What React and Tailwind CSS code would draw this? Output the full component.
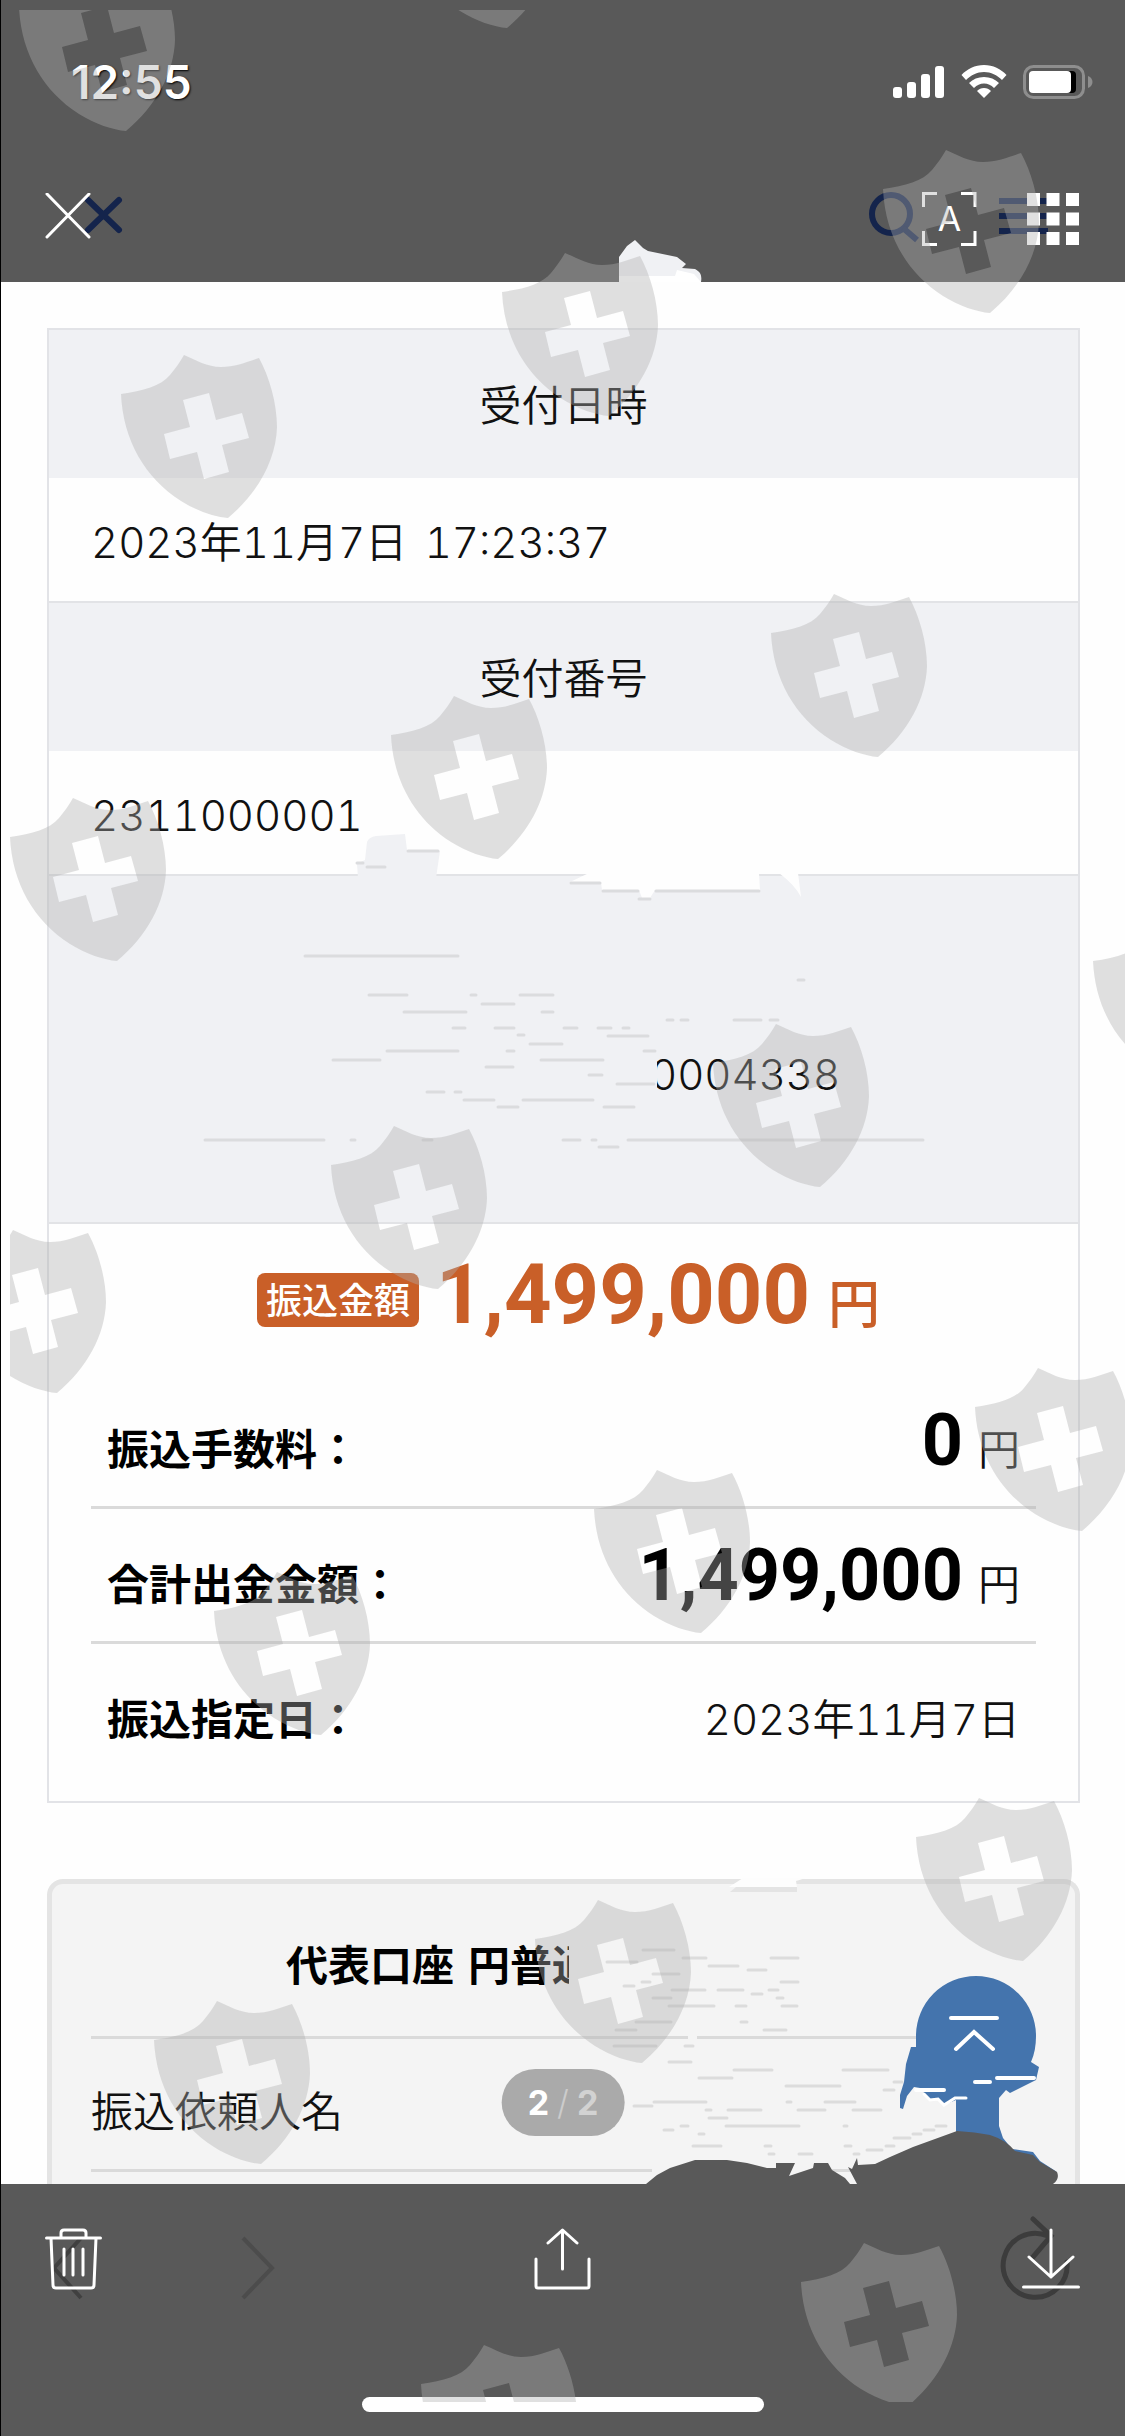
import React from "react";

const SHIELDS = [
  [19, -32], [400, -135], [121, 355], [502, 253], [883, 150], [771, 594],
  [391, 696], [10, 798], [1093, 922], [713, 1024], [331, 1126], [-50, 1230],
  [975, 1368], [594, 1470], [214, 1572], [916, 1798], [535, 1900],
  [154, 2001], [801, 2243], [421, 2345],
];

const SHIELD_PATH =
  "M0 39C22 36 40 31 49 20C54 14 59 7 63 0C75 5 86 12 100 12C114 12 126 7 138 3C148 21 156 48 156 72C155 105 137 138 107 163C94 162 76 156 60 146C24 123 2 85 0 39ZM62 45L69 72L43 79L49 104L76 97L83 124L108 117L101 90L128 83L121 58L95 65L88 38Z";

const DETAIL_DASHES = [
  [304, 459, 956], [368, 408, 995], [470, 477, 995], [519, 554, 995], [481, 515, 1004],
  [403, 467, 1012], [541, 554, 1012], [452, 466, 1028], [494, 515, 1028], [563, 578, 1028],
  [597, 612, 1028], [622, 630, 1028], [607, 649, 1036], [517, 525, 1035], [529, 563, 1044],
  [506, 515, 1051], [386, 459, 1051], [643, 656, 1051], [332, 381, 1060], [540, 604, 1060],
  [485, 514, 1067], [588, 603, 1075], [616, 655, 1084], [426, 445, 1092], [454, 462, 1092],
  [463, 495, 1100], [522, 594, 1100], [497, 519, 1107], [603, 635, 1107], [204, 325, 1140],
  [350, 356, 1140], [422, 433, 1140], [562, 581, 1140], [591, 597, 1140], [627, 924, 1140],
  [598, 619, 1147], [733, 762, 1020], [769, 779, 1020], [666, 674, 1020], [680, 689, 1020],
  [797, 805, 980], [407, 439, 851], [366, 386, 867], [356, 364, 863], [570, 601, 883],
  [602, 639, 891], [655, 760, 891], [638, 651, 899],
];

const ACCOUNT_DASHES = [
  [642, 675, 1950], [606, 638, 1962], [652, 680, 1974], [682, 707, 1958], [708, 739, 1966],
  [770, 799, 1958], [747, 767, 1970], [780, 799, 1982], [641, 651, 1982], [623, 635, 1986],
  [671, 706, 1990], [717, 744, 1990], [768, 779, 1990], [751, 763, 1994], [652, 672, 1998],
  [776, 784, 1998], [668, 715, 2006], [735, 747, 2006], [781, 798, 2006], [635, 672, 2022],
  [740, 748, 2022], [615, 637, 2030], [763, 787, 2030], [613, 657, 2046], [684, 694, 2046],
  [668, 692, 2062], [733, 773, 2070], [842, 889, 2070], [698, 733, 2078], [785, 841, 2086],
  [653, 707, 2102], [786, 792, 2102], [824, 856, 2102], [633, 653, 2106], [705, 712, 2110],
  [727, 762, 2110], [797, 826, 2110], [852, 882, 2110], [708, 728, 2118], [725, 800, 2126],
  [680, 689, 2126], [843, 848, 2126], [663, 674, 2130], [698, 705, 2134], [692, 722, 2146],
  [764, 772, 2146], [844, 852, 2146], [768, 775, 2154], [798, 813, 2154], [853, 860, 2154],
  [912, 922, 2134], [893, 911, 2138], [885, 895, 2146], [866, 883, 2150], [935, 947, 2126],
  [923, 935, 2130], [883, 895, 2090], [893, 903, 2082],
];

function Dashes({ items, color }) {
  return (
    <g stroke={color} strokeWidth="3" strokeLinecap="round">
      {items.map(([a, b, y], i) => (
        <line key={i} x1={a + 1} x2={b - 1} y1={y} y2={y} />
      ))}
    </g>
  );
}

function Watermark() {
  return (
    <div aria-hidden="true" className="pointer-events-none absolute inset-x-0 top-[10px] h-[2392px] overflow-hidden pl-[9px]">
      <svg width="1115" height="2392" viewBox="10 10 1115 2392" fill="#b0b0b0" fillOpacity="0.39" fillRule="evenodd" className="block max-w-none">
        {SHIELDS.map(([x, y]) => (
          <path key={`${x}-${y}`} d={SHIELD_PATH} transform={`translate(${x} ${y})`} />
        ))}
      </svg>
    </div>
  );
}

function StatusIcons() {
  return (
    <div className="flex items-center gap-4">
      <svg width="52" height="34" viewBox="0 0 52 34" fill="#fff">
        <rect x="0" y="22" width="9" height="11" rx="3" />
        <rect x="14" y="17" width="9" height="16" rx="3" />
        <rect x="28" y="9" width="9" height="24" rx="3" />
        <rect x="42" y="1" width="9" height="32" rx="3" />
      </svg>
      <svg width="46" height="34" viewBox="0 0 46 34" fill="#fff">
        <path d="M23 0C32 0 40 4 45.500 10L41 15C36 10 30 7 23 7S10 10 5 15L.5 10C6 4 14 0 23 0Z" />
        <path d="M23 12C29 12 34 14 38 18L33 23C30 20 27 18.500 23 18.500S16 20 13 23L8 18C12 14 17 12 23 12Z" />
        <path d="M23 23C26 23 28 24 30 26L23 33L16 26C18 24 20 23 23 23Z" />
      </svg>
      <svg width="70" height="34" viewBox="0 0 70 34">
        <rect x="1.500" y="1.500" width="59" height="31" rx="9" fill="none" stroke="#8e8e8e" strokeWidth="3" />
        <rect x="12" y="6" width="41" height="22" rx="4" fill="#000" />
        <rect x="6" y="6" width="42" height="22" rx="4" fill="#fff" />
        <path d="M65 11C71 13 71 21 65 23Z" fill="#8e8e8e" />
      </svg>
    </div>
  );
}

function Header() {
  return (
    <header className="relative bg-[#595959]">
      <div className="flex h-[164px] items-center justify-between pl-[70px] pr-8">
        <time className="font-['Inter',sans-serif] text-[46px] font-semibold leading-none text-white [text-shadow:1px_1px_2px_#000]">12:55</time>
        <StatusIcons />
      </div>

      <svg aria-hidden="true" className="absolute bottom-0 left-0 h-[118px] w-[140px]" viewBox="1 164 140 118" fill="none" stroke="#14244c" strokeWidth="6" strokeLinecap="round">
        <path d="M88 200L119 230M119 200L88 230" />
      </svg>
      <svg aria-hidden="true" className="absolute bottom-0 right-0 h-[118px] w-[265px]" viewBox="860 164 265 118" fill="none" stroke="#14244c" strokeWidth="6">
        <circle cx="891" cy="214" r="19" />
        <path d="M903 228L917 240M999 201H1048M999 216H1048M999 231H1048" />
      </svg>
      <svg aria-hidden="true" className="absolute bottom-0 left-[617px] h-11 w-[88px]" viewBox="618 238 88 44">
        <path d="M619 282V257L627 246L635 240L643 248L648 251L677 257L686 264L682 268L695 269C701 272 702 276 701 282Z" fill="#f0f1f4" />
        <path d="M619 276H675L677 270L694 274L701 282H619Z" fill="#fff" />
      </svg>

      <div className="relative flex h-[118px] items-center justify-between pb-2 pl-11 pr-[46px]">
        <button type="button" aria-label="閉じる">
          <svg width="46" height="52" viewBox="0 0 46 52" fill="none" stroke="#fff" strokeWidth="3" strokeLinecap="round">
            <path d="M2 1L44 44M44 1L2 44" />
          </svg>
        </button>
        <div className="flex items-center gap-[50px]">
          <button type="button" aria-label="テキスト認識" className="relative flex h-[54px] w-[55px] items-center justify-center font-['Inter',sans-serif] text-[34px] font-normal leading-none text-white">
            <svg className="absolute inset-0" width="55" height="54" viewBox="0 0 55 54" fill="none" stroke="#fff" strokeWidth="3">
              <path d="M1.500 15V1.500H15M39 1.500H53V15M53 39V52.500H39M15 52.500H1.500V39" />
            </svg>
            A
          </button>
          <button type="button" aria-label="一覧">
            <svg width="52" height="52" viewBox="0 0 52 52" fill="#fff">
              {[0, 19.5, 39].map((y) => [0, 19.5, 39].map((x) => <rect key={`${x}-${y}`} x={x} y={y} width="13" height="13" />))}
            </svg>
          </button>
        </div>
      </div>
    </header>
  );
}

function Num({ children }) {
  return <span className="font-['Inter',sans-serif] leading-none tabular-nums">{children}</span>;
}

function JapaneseDate() {
  return (
    <>
      <Num>2023</Num>年<Num>11</Num>月<Num>7</Num>日
    </>
  );
}

function AmountRow({ label, children, last }) {
  return (
    <div className={last ? "flex items-baseline justify-between pb-[54px] pl-4 pr-4 pt-[43px]" : "flex items-baseline justify-between border-b-[3px] border-[#dadada] pb-[25px] pl-4 pr-4 pt-[27px]"}>
      <dt className="font-bold text-black">{label}</dt>
      <dd>{children}</dd>
    </div>
  );
}

function Yen({ value }) {
  return (
    <>
      <span className="mr-[15px] font-['Roboto',sans-serif] text-[72px] font-bold leading-[80px] text-black">{value}</span>円
    </>
  );
}

function TransferCard() {
  return (
    <section className="mt-[46px] border-2 border-[#e2e3e7] bg-[#fefefe]">
      <dl>
        <dt className="bg-[#f0f1f4] pb-[45px] pt-[43px] text-center">受付日時</dt>
        <dd className="border-b-2 border-[#e2e3e6] pb-[31px] pl-[42px] pt-[32px]">
          <JapaneseDate /> <span className="ml-2"><Num>17:23:37</Num></span>
        </dd>
        <dt className="bg-[#f0f1f4] pb-[45px] pt-[43px] text-center">受付番号</dt>
        <dd className="border-b-2 border-[#e2e3e6] pb-[31px] pl-[42px] pt-[32px]">
          <Num>2311000001</Num>
        </dd>
      </dl>
      <p className="border-b-2 border-[#e2e3e6] bg-[#f0f1f4] pb-[120px] pl-[601px] pt-[166px]">
        <Num>0004338</Num>
      </p>
      <div className="flex items-baseline justify-center pb-[34px] pl-[10px] pt-[26px] text-[#c95f28]">
        <span className="mr-[17px] mt-[23px] self-start rounded-lg bg-[#c95f28] px-[9px] pb-1 text-[36px] font-medium leading-[50px] text-white">振込金額</span>
        <strong className="mr-[18px] font-['Roboto',sans-serif] text-[83px] font-bold leading-[90px]">1,499,000</strong>
        <span className="text-[52px] font-medium leading-none">円</span>
      </div>
      <dl className="mx-[42px]">
        <AmountRow label="振込手数料："><Yen value="0" /></AmountRow>
        <AmountRow label="合計出金金額："><Yen value="1,499,000" /></AmountRow>
        <AmountRow label="振込指定日：" last><JapaneseDate /></AmountRow>
      </dl>
    </section>
  );
}

function AccountCard() {
  return (
    <section className="mt-[76px] min-h-0 flex-1 rounded-t-2xl border-[5px] border-b-0 border-[#e4e4e4] bg-[#f4f4f4] px-[39px]">
      <h2 className="flex gap-[14px] border-b-[3px] border-[#dadada] pb-[43px] pl-[195px] pt-[49px] font-bold text-black">
        <span>代表口座</span>
        <span>円普通</span>
      </h2>
      <p className="border-b-[3px] border-[#dadada] pb-[30px] pt-[40px]">振込依頼人名</p>
    </section>
  );
}

function Erasures() {
  return (
    <svg aria-hidden="true" className="pointer-events-none absolute left-0 top-0 h-[1902px] w-[1124px]" viewBox="1 282 1124 1902">
      <rect x="640" y="1050" width="17" height="46" fill="#f0f1f4" />
      <rect x="569" y="1935" width="40" height="60" fill="#f4f4f4" />
      <path d="M358 878L357 864L365 860L367 842Q369 837 376 836L405 834L407 850L440 851L436 878Z" fill="#f0f1f4" />
      <path d="M589 873L570 882H601L602 890H639L642 898H650L655 890H760L759 873ZM779 873Q795 885 801 897L798 873Z" fill="#fefefe" />
      <Dashes items={DETAIL_DASHES} color="#dbdcde" />
      <path d="M743 1878L729 1887H797L796 1881L806 1878Z" fill="#fdfdfd" />
      <path d="M736 1887H797V1892H730Z" fill="#e4e4e4" />
      <rect x="688" y="2035" width="9" height="6" fill="#f4f4f4" />
      <rect x="652" y="2167" width="175" height="6" fill="#f4f4f4" />
      <Dashes items={ACCOUNT_DASHES} color="#dcdcdc" />
    </svg>
  );
}

function BackToTop() {
  return (
    <button type="button" aria-label="ページの先頭へ" className="absolute bottom-0 right-[65px] h-[210px] w-[162px]">
      <svg width="162" height="210" viewBox="898 1974 162 210" fill="none">
        <path d="M916 2047L916 2036A60 60 0 1 1 1036 2036Q1036 2051 1031 2062L1039 2067L1036 2080L1010 2093L1006 2090L999 2098V2126L1003 2138L1012 2149L1033 2152L1040 2161L1057 2172L1000 2160H956V2100L944 2105L938 2099L930 2100L920 2088L914 2087L907 2096L903 2109L900 2108V2095L904 2082L906 2064L911 2047Z" fill="#4474ad" />
        <g stroke="#fff" strokeWidth="4" strokeLinecap="round">
          <path d="M951 2018H997M997 2078H1034M975 2082H990M916 2090H944" />
          <path d="M924 2094L930 2100L938 2099L944 2105L955 2098H966" strokeWidth="3" />
          <path d="M956 2049L974 2032L993 2049" />
        </g>
      </svg>
    </button>
  );
}

function Shadow() {
  return (
    <svg aria-hidden="true" className="pointer-events-none absolute bottom-0 right-[65px] h-[60px] w-[420px]" viewBox="640 2124 420 60">
      <path d="M646 2184L657 2175L670 2168L695 2160H727L747 2163L767 2168H776V2163H795L789 2176L813 2168L814 2163H828L832 2170L845 2178L850 2184H857L848 2167L852 2169L857 2158L858 2165L875 2164L890 2157L913 2147L957 2131Q975 2132 990 2135Q1006 2140 1015 2151L1033 2155L1040 2162L1057 2172Q1060 2179 1053 2184Z" fill="#595959" />
    </svg>
  );
}

function Toolbar() {
  return (
    <footer className="relative bg-[#595959] pb-6">
      <svg aria-hidden="true" className="absolute left-0 top-0 h-[140px] w-[300px]" viewBox="1 2184 300 140" fill="none" strokeWidth="4">
        <path d="M81 2238L54 2268L81 2298" stroke="#404040" />
        <path d="M243 2238L272 2268L243 2298" stroke="#4c4c4c" />
      </svg>
      <svg aria-hidden="true" className="absolute right-0 top-0 h-[140px] w-[125px]" viewBox="1000 2184 125 140" fill="none" stroke="#3c3c3c" strokeWidth="5" strokeLinecap="round">
        <path d="M1048 2236A32 32 0 1 0 1067 2262M1033 2219L1051 2236L1033 2257" />
      </svg>
      <div className="relative flex items-center justify-between pb-[107px] pl-11 pr-[45px] pt-[44px]">
        <button type="button" aria-label="削除">
          <svg width="57" height="62" viewBox="0 0 57 62" fill="none" stroke="#fff" strokeWidth="3" strokeLinecap="round" strokeLinejoin="round">
            <path d="M1.500 10H55.500M16 10V5Q16 2 19 2H38Q41 2 41 5V10M6 10L8 57Q8 60 11 60H46Q49 60 49 57L51 10M19 21V47M28 21V47M38 21V47" />
          </svg>
        </button>
        <button type="button" aria-label="共有">
          <svg width="57" height="62" viewBox="0 0 57 62" fill="none" stroke="#fff" strokeWidth="3" strokeLinecap="round" strokeLinejoin="round">
            <path d="M2 31V58Q2 60 4 60H53Q55 60 55 58V31M28.500 41V2M14 15L28.500 2L43 15" />
          </svg>
        </button>
        <button type="button" aria-label="ダウンロード">
          <svg width="58" height="62" viewBox="0 0 58 62" fill="none" stroke="#fff" strokeWidth="3" strokeLinecap="round" strokeLinejoin="round">
            <path d="M29 2V49M7 29L29 49L51 29M1.500 59H56.500" />
          </svg>
        </button>
      </div>
      <div className="mx-auto h-[15px] w-[402px] rounded-full bg-white" />
    </footer>
  );
}

export default function App() {
  return (
    <div className="relative flex min-h-screen flex-col overflow-hidden border-l border-black bg-[#fefefe] font-['Noto_Sans_CJK_JP',sans-serif] text-[42px] font-[350] leading-[60px] text-[#111]">
      <Header />
      <main className="relative flex flex-1 flex-col pl-[46px] pr-[45px]">
        <TransferCard />
        <AccountCard />
        <Erasures />
        <BackToTop />
        <Shadow />
        <div className="absolute bottom-12 left-1/2 flex h-[67px] -translate-x-1/2 items-center gap-2 rounded-full bg-[#aaaaaa] px-[26px] font-['Inter',sans-serif] text-[34px] font-bold text-white">
          <span>2</span>
          <span className="font-light text-[#cccccc]">/</span>
          <span className="text-[#d2d2d2]">2</span>
        </div>
      </main>
      <Toolbar />
      <Watermark />
    </div>
  );
}
